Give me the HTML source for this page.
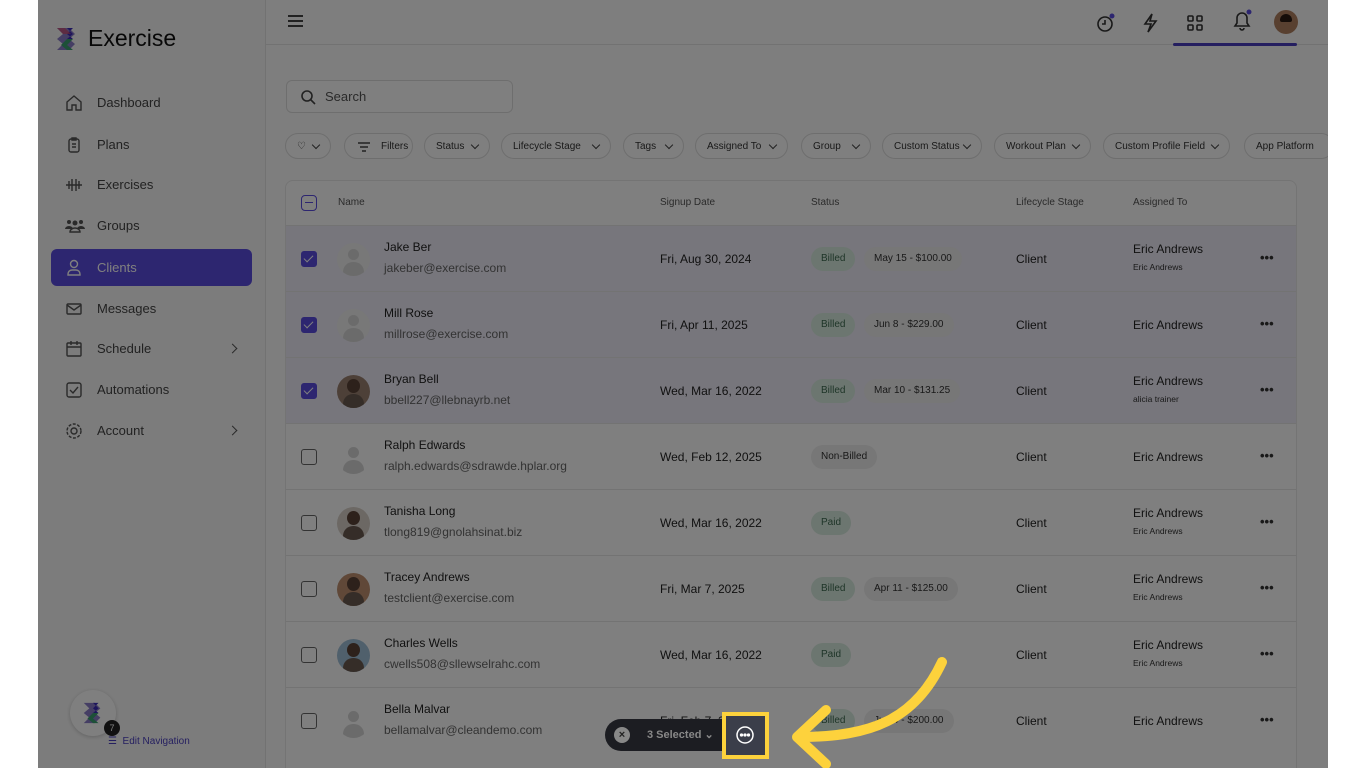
<!DOCTYPE html>
<html><head><meta charset="utf-8"><style>
*{box-sizing:border-box;margin:0;padding:0}
body{width:1366px;height:768px;overflow:hidden;background:#fff;font-family:"Liberation Sans",sans-serif;position:relative;color:#333}
.app{position:absolute;left:38px;top:0;width:1290px;height:768px;background:#fdfdfd;overflow:hidden}
.side{position:absolute;left:0;top:0;width:228px;height:768px;background:#f9f9f9;border-right:1px solid #e4e4e4}
.logo{position:absolute;left:16px;top:25px;display:flex;align-items:center;gap:8px;font-size:23px;color:#111}
.nav{position:absolute;left:13px;width:201px;height:37px;display:flex;align-items:center;padding-left:46px;font-size:13px;color:#444;border-radius:6px}
.nav svg{position:absolute;left:14px;top:10px}
.nav.act{background:#5b4ce0;color:#fff}
.chev{position:absolute;right:16px;top:15px;width:7px;height:7px;border-right:1.5px solid #555;border-top:1.5px solid #555;transform:rotate(45deg)}
.top{position:absolute;left:228px;top:0;right:0;height:45px;border-bottom:1px solid #e4e4e4}
.search{position:absolute;left:248px;top:80px;width:227px;height:33px;border:1px solid #ddd;border-radius:6px;background:#fff;font-size:13px;color:#555;padding:8px 0 0 38px}
.chip{position:absolute;top:133px;height:26px;border:1px solid #ddd;border-radius:13px;background:#fff;font-size:10px;color:#333;padding:7px 0 0 11px;white-space:nowrap}
.chip:after{content:"";position:absolute;right:11px;top:8px;width:5px;height:5px;border-right:1.3px solid #444;border-bottom:1.3px solid #444;transform:rotate(45deg)}
.chip.nf:after{display:none}
.tbl{position:absolute;left:247px;top:180px;width:1012px;height:600px;border:1px solid #e8e8e8;border-radius:8px;background:#fff;overflow:hidden}
.th{position:absolute;top:16px;font-size:10px;color:#555}
.row{position:absolute;left:0;width:1012px;height:66px;border-top:1px solid #e6e6e6;background:#fff}
.row.sel{background:#eeecf8}
.cb{position:absolute;left:15px;top:25px;width:16px;height:16px;border:1.5px solid #666;border-radius:3px;background:#fff}
.sel .cb{background:#5b4ce0;border-color:#5b4ce0}
.sel .cb:after{content:"";position:absolute;left:4px;top:1px;width:4px;height:8px;border-right:1.5px solid #fff;border-bottom:1.5px solid #fff;transform:rotate(45deg)}
.av{position:absolute;left:51px;top:17px;width:33px;height:33px;border-radius:50%;background:#f0f0f0;overflow:hidden}
.av:before{content:"";position:absolute;left:11px;top:6px;width:11px;height:11px;border-radius:50%;background:#d6d6d6}
.av:after{content:"";position:absolute;left:6px;top:19px;width:21px;height:14px;border-radius:10px 10px 0 0;background:#d6d6d6}
.av.ph{background:#9a8070}.av.ph:before{background:#5a4236;top:4px;left:10px;width:13px;height:14px}.av.ph:after{background:#6a5a50}
.nm{position:absolute;left:98px;top:14px;font-size:12px;color:#222}
.em{position:absolute;left:98px;top:35px;font-size:12px;color:#666}
.dt{position:absolute;left:374px;top:26px;font-size:12px;color:#222}
.pill{position:absolute;top:21px;height:24px;border-radius:12px;font-size:10px;padding:6px 10px 0;white-space:nowrap}
.g{left:525px;background:#d8ece0;color:#3d6a50}
.gr{background:#eeeeee;color:#333;left:578px}
.lc{position:absolute;left:730px;top:26px;font-size:12px;color:#222}
.as{position:absolute;left:847px;top:16px;font-size:12px;color:#222}
.as.one{top:26px}
.as small{display:block;font-size:8.5px;margin-top:6px;color:#333}
.dots{position:absolute;left:974px;top:24px;font-size:13px;font-weight:bold;color:#333}
.ov{position:absolute;left:38px;top:0;width:1290px;height:768px;background:rgba(0,0,0,.5)}
.sb{position:absolute;left:1316px;top:0;width:12px;height:768px}
</style></head><body>
<div class="app">
 <div class="side">
  <div class="logo"><svg width="26" height="26" viewBox="0 0 26 26"><path d="M3 2h12l6 6-6 5 6 5-6 6H3l6-6-6-5 6-5z" fill="#8a7cc8"/><path d="M13 2h6l-6 6 6 5H13l6-5z" fill="#3a2ab8"/><path d="M13 13h6l-6 6 6 5h-6l-6-5z" fill="#3aa070"/><path d="M3 2h8l6 6H9z" fill="#d04a6a" opacity=".7"/></svg>Exercise</div>
  <div class="nav" style="top:84px"><svg width="18" height="18" viewBox="0 0 18 18" fill="none" stroke="#555" stroke-width="1.4"><path d="M2 8l7-6 7 6v8H11v-5H7v5H2z"/></svg>Dashboard</div>
  <div class="nav" style="top:126px"><svg width="18" height="18" viewBox="0 0 18 18" fill="none" stroke="#555" stroke-width="1.4"><rect x="4" y="3" width="10" height="13" rx="2"/><path d="M7 2h4v2H7zM7 8h4M7 11h4"/></svg>Plans</div>
  <div class="nav" style="top:166px"><svg width="18" height="18" viewBox="0 0 18 18" fill="none" stroke="#555" stroke-width="1.4"><path d="M1 9h16M4 5v8M7 3v12M11 3v12M14 5v8"/></svg>Exercises</div>
  <div class="nav" style="top:207px"><svg width="20" height="18" viewBox="0 0 20 18" fill="#555"><circle cx="4" cy="5" r="2"/><circle cx="10" cy="6" r="2.5"/><circle cx="16" cy="5" r="2"/><path d="M0 12a4 3 0 0 1 8 0zM12 12a4 3 0 0 1 8 0z"/><path d="M5 15a5 4 0 0 1 10 0z" fill="none" stroke="#555" stroke-width="1.4"/></svg>Groups</div>
  <div class="nav act" style="top:249px"><svg width="18" height="18" viewBox="0 0 18 18" fill="none" stroke="#fff" stroke-width="1.4"><circle cx="9" cy="5" r="3.5"/><path d="M3 16v-1a4 4 0 0 1 4-4h4a4 4 0 0 1 4 4v1z"/></svg>Clients</div>
  <div class="nav" style="top:290px"><svg width="18" height="18" viewBox="0 0 18 18" fill="none" stroke="#555" stroke-width="1.4"><rect x="2" y="4" width="14" height="10" rx="1"/><path d="M2 5l7 5 7-5"/></svg>Messages</div>
  <div class="nav" style="top:330px"><svg width="18" height="18" viewBox="0 0 18 18" fill="none" stroke="#555" stroke-width="1.4"><rect x="2" y="3" width="14" height="13" rx="1"/><path d="M2 7h14M6 1v4M12 1v4"/></svg>Schedule<span class="chev"></span></div>
  <div class="nav" style="top:371px"><svg width="18" height="18" viewBox="0 0 18 18" fill="none" stroke="#555" stroke-width="1.4"><rect x="2" y="2" width="14" height="14" rx="2"/><path d="M5 9l3 3 5-6"/></svg>Automations</div>
  <div class="nav" style="top:412px"><svg width="18" height="18" viewBox="0 0 18 18" fill="none" stroke="#555" stroke-width="1.4"><circle cx="9" cy="9" r="3"/><circle cx="9" cy="9" r="7" stroke-dasharray="3 1.5"/></svg>Account<span class="chev"></span></div>
  <div style="position:absolute;left:32px;top:690px;width:46px;height:46px;border-radius:50%;background:#fff;box-shadow:0 1px 4px rgba(0,0,0,.2)"><svg style="margin:11px" width="24" height="24" viewBox="0 0 26 26"><path d="M3 2h12l6 6-6 5 6 5-6 6H3l6-6-6-5 6-5z" fill="#8a7cc8"/><path d="M13 2h6l-6 6 6 5H13l6-5z" fill="#3a2ab8"/><path d="M13 13h6l-6 6 6 5h-6l-6-5z" fill="#3aa070"/></svg></div>
  <div style="position:absolute;left:66px;top:720px;width:16px;height:16px;border-radius:50%;background:#222;color:#fff;font-size:9px;text-align:center;line-height:16px">7</div>
  <div style="position:absolute;left:70px;top:736px;font-size:10px;color:#4a3fc0">☰ &nbsp;Edit Navigation</div>
 </div>
 <div class="top">
  <div style="position:absolute;left:22px;top:15px;width:15px;height:12px;border-top:2px solid #444;border-bottom:2px solid #444"><div style="margin-top:3px;height:2px;background:#444"></div></div>
  <svg style="position:absolute;left:829px;top:12px" width="22" height="22" viewBox="0 0 22 22" fill="none" stroke="#333" stroke-width="1.6"><circle cx="10" cy="12" r="7"/><path d="M10 8v4h-3"/><circle cx="17" cy="4" r="2.5" fill="#5b4ce0" stroke="none"/></svg>
  <svg style="position:absolute;left:875px;top:13px" width="18" height="20" viewBox="0 0 18 20" fill="none" stroke="#333" stroke-width="1.6"><path d="M11 1L4 11h6l-3 8 8-11H9z"/></svg>
  <svg style="position:absolute;left:920px;top:14px" width="18" height="18" viewBox="0 0 18 18" fill="none" stroke="#333" stroke-width="1.6"><rect x="2" y="2" width="5" height="5" rx="1"/><rect x="11" y="2" width="5" height="5" rx="1"/><rect x="2" y="11" width="5" height="5" rx="1"/><rect x="11" y="11" width="5" height="5" rx="1"/></svg>
  <svg style="position:absolute;left:965px;top:8px" width="22" height="24" viewBox="0 0 22 24" fill="none" stroke="#333" stroke-width="1.6"><path d="M4 18h14l-2-3v-5a5 5 0 0 0-10 0v5z M9 20a2 2 0 0 0 4 0"/><circle cx="18" cy="4" r="2.5" fill="#5b4ce0" stroke="none"/></svg>
  <div style="position:absolute;left:1008px;top:10px;width:24px;height:24px;border-radius:50%;background:#b08060"><div style="margin:4px 6px;width:12px;height:8px;background:#2a1a12;border-radius:6px 6px 2px 2px"></div></div>
  <div style="position:absolute;left:907px;top:43px;width:124px;height:3px;background:#4a3fc0;border-radius:2px"></div>
 </div>
 <div class="search"><svg style="position:absolute;left:13px;top:8px" width="16" height="16" viewBox="0 0 16 16" fill="none" stroke="#444" stroke-width="1.6"><circle cx="7" cy="7" r="5"/><path d="M11 11l4 4"/></svg>Search</div>
 <div class="chip" style="left:247px;width:46px">♡</div>
 <div class="chip nf" style="left:306px;width:69px;padding-left:36px">Filters<svg style="position:absolute;left:12px;top:7px" width="14" height="12" viewBox="0 0 14 12" stroke="#444" stroke-width="1.4"><path d="M1 2h12M3 6h8M5 10h4"/></svg></div>
 <div class="chip" style="left:386px;width:66px">Status</div>
 <div class="chip" style="left:463px;width:110px">Lifecycle Stage</div>
 <div class="chip" style="left:585px;width:61px">Tags</div>
 <div class="chip" style="left:657px;width:93px">Assigned To</div>
 <div class="chip" style="left:763px;width:70px">Group</div>
 <div class="chip" style="left:844px;width:100px">Custom Status</div>
 <div class="chip" style="left:956px;width:97px">Workout Plan</div>
 <div class="chip" style="left:1065px;width:127px">Custom Profile Field</div>
 <div class="chip nf" style="left:1206px;width:90px">App Platform</div>
 <div class="tbl">
  <div style="position:absolute;left:15px;top:14px;width:16px;height:16px;border:1.5px solid #5b4ce0;border-radius:4px"><div style="margin:5.5px 3px;height:1.5px;background:#5b4ce0"></div></div>
  <div class="th" style="left:52px">Name</div><div class="th" style="left:374px">Signup Date</div><div class="th" style="left:525px">Status</div><div class="th" style="left:730px">Lifecycle Stage</div><div class="th" style="left:847px">Assigned To</div>
  <div class="row sel" style="top:44px"><div class="cb"></div><div class="av"></div><div class="nm">Jake Ber</div><div class="em">jakeber@exercise.com</div><div class="dt">Fri, Aug 30, 2024</div><div class="pill g">Billed</div><div class="pill gr">May 15 - $100.00</div><div class="lc">Client</div><div class="as">Eric Andrews<small>Eric Andrews</small></div><div class="dots">•••</div></div>
  <div class="row sel" style="top:110px"><div class="cb"></div><div class="av"></div><div class="nm">Mill Rose</div><div class="em">millrose@exercise.com</div><div class="dt">Fri, Apr 11, 2025</div><div class="pill g">Billed</div><div class="pill gr">Jun 8 - $229.00</div><div class="lc">Client</div><div class="as one">Eric Andrews</div><div class="dots">•••</div></div>
  <div class="row sel" style="top:176px"><div class="cb"></div><div class="av ph"></div><div class="nm">Bryan Bell</div><div class="em">bbell227@llebnayrb.net</div><div class="dt">Wed, Mar 16, 2022</div><div class="pill g">Billed</div><div class="pill gr">Mar 10 - $131.25</div><div class="lc">Client</div><div class="as">Eric Andrews<small>alicia trainer</small></div><div class="dots">•••</div></div>
  <div class="row" style="top:242px"><div class="cb"></div><div class="av" style="background:#fff"></div><div class="nm">Ralph Edwards</div><div class="em">ralph.edwards@sdrawde.hplar.org</div><div class="dt">Wed, Feb 12, 2025</div><div class="pill gr" style="left:525px">Non-Billed</div><div class="lc">Client</div><div class="as one">Eric Andrews</div><div class="dots">•••</div></div>
  <div class="row" style="top:308px"><div class="cb"></div><div class="av ph" style="background:#d8d0c8"></div><div class="nm">Tanisha Long</div><div class="em">tlong819@gnolahsinat.biz</div><div class="dt">Wed, Mar 16, 2022</div><div class="pill g">Paid</div><div class="lc">Client</div><div class="as">Eric Andrews<small>Eric Andrews</small></div><div class="dots">•••</div></div>
  <div class="row" style="top:374px"><div class="cb"></div><div class="av ph" style="background:#c09070"></div><div class="nm">Tracey Andrews</div><div class="em">testclient@exercise.com</div><div class="dt">Fri, Mar 7, 2025</div><div class="pill g">Billed</div><div class="pill gr">Apr 11 - $125.00</div><div class="lc">Client</div><div class="as">Eric Andrews<small>Eric Andrews</small></div><div class="dots">•••</div></div>
  <div class="row" style="top:440px"><div class="cb"></div><div class="av ph" style="background:#a0c0d8"></div><div class="nm">Charles Wells</div><div class="em">cwells508@sllewselrahc.com</div><div class="dt">Wed, Mar 16, 2022</div><div class="pill g">Paid</div><div class="lc">Client</div><div class="as">Eric Andrews<small>Eric Andrews</small></div><div class="dots">•••</div></div>
  <div class="row" style="top:506px"><div class="cb"></div><div class="av" style="background:#fff"></div><div class="nm">Bella Malvar</div><div class="em">bellamalvar@cleandemo.com</div><div class="dt">Fri, Feb 7, 2025</div><div class="pill g">Billed</div><div class="pill gr">Jun 4 - $200.00</div><div class="lc">Client</div><div class="as one">Eric Andrews</div><div class="dots">•••</div></div>
 </div>
 <div class="sb"><div style="position:absolute;left:2px;top:50px;width:8px;height:330px;background:#555;border-radius:4px"></div></div>
</div>
<div class="ov"></div>
<div style="position:absolute;left:605px;top:719px;width:160px;height:32px;border-radius:16px;background:#1c1d22"></div>
<div style="position:absolute;left:614px;top:727px;width:16px;height:16px;border-radius:50%;background:#888;color:#222;font-size:11px;text-align:center;line-height:16px;font-weight:bold">×</div>
<div style="position:absolute;left:647px;top:728px;font-size:11px;color:#888;font-weight:bold">3 Selected ⌄</div>
<div style="position:absolute;left:722px;top:712px;width:47px;height:47px;border:4px solid #fdd23c;background:#3b3e4a"></div>
<svg style="position:absolute;left:735px;top:725px" width="20" height="20" viewBox="0 0 20 20" fill="none" stroke="#fff" stroke-width="1.5"><circle cx="10" cy="10" r="8"/><circle cx="6.5" cy="10" r=".9" fill="#fff"/><circle cx="10" cy="10" r=".9" fill="#fff"/><circle cx="13.5" cy="10" r=".9" fill="#fff"/></svg>
<svg style="position:absolute;left:0;top:0" width="1366" height="768" fill="none" stroke="#fdd23c" stroke-width="10" stroke-linecap="round" stroke-linejoin="round"><path d="M942 662C915 720 870 737 800 737"/><path d="M826 710L797 737L826 764"/></svg>
</body></html>
